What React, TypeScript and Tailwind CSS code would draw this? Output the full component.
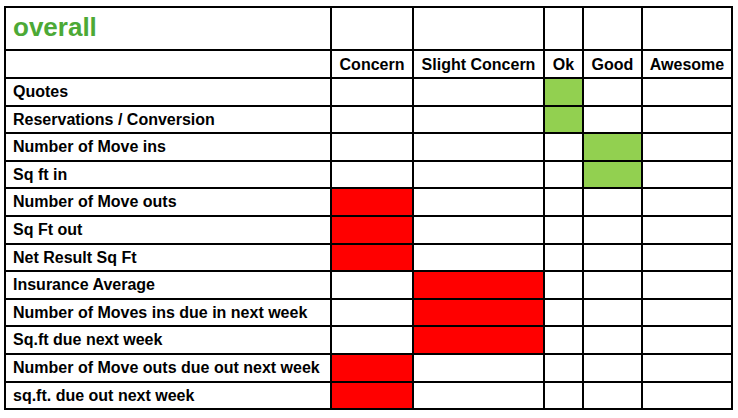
import { Fragment } from 'react'

const columns = ['Concern', 'Slight Concern', 'Ok', 'Good', 'Awesome']

// index of the coloured column for each metric
const rows = [
  { label: 'Quotes', mark: 2 },
  { label: 'Reservations / Conversion', mark: 2 },
  { label: 'Number of Move ins', mark: 3 },
  { label: 'Sq ft in', mark: 3 },
  { label: 'Number of Move outs', mark: 0 },
  { label: 'Sq Ft out', mark: 0 },
  { label: 'Net Result Sq Ft', mark: 0 },
  { label: 'Insurance Average', mark: 1 },
  { label: 'Number of Moves ins due in next week', mark: 1 },
  { label: 'Sq.ft due next week', mark: 1 },
  { label: 'Number of Move outs due out next week', mark: 0 },
  { label: 'sq.ft. due out next week', mark: 0 },
]

const markColor = ['bg-[#ff0000]', 'bg-[#ff0000]', 'bg-[#92d050]', 'bg-[#92d050]', 'bg-[#92d050]']

export default function App() {
  return (
    <div className="h-[418px] w-[738px] bg-white pl-[4px] pt-[6px] font-['Liberation_Sans',Arial,sans-serif]">
      <div className="grid w-[729px] grid-cols-[324px_80px_129px_37px_57px_88px] grid-rows-[41px_26px_26px_25px_26px_25px_26px_26px_25px_26px_25px_26px_26px_25px] gap-[2px] bg-black p-[2px] pr-0">
        <div className="flex items-center bg-white pl-[7px] pb-[2px] text-[26px] font-bold text-[#4ca936]">overall</div>
        {columns.map((c) => (
          <div key={c} className="bg-white" />
        ))}

        <div className="bg-white" />
        {columns.map((c) => (
          <div key={c} className="flex items-center justify-center bg-white pt-[1px] text-[16px] font-bold text-black">
            {c}
          </div>
        ))}

        {rows.map((r) => (
          <Fragment key={r.label}>
            <div className="flex items-center bg-white pl-[7px] text-[16px] font-bold text-black">{r.label}</div>
            {columns.map((c, i) => (
              <div key={c} className={i === r.mark ? markColor[i] : 'bg-white'} />
            ))}
          </Fragment>
        ))}
      </div>
    </div>
  )
}
